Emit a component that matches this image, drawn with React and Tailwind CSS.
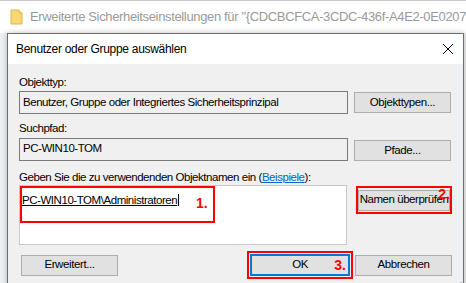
import React from 'react'

const font = { fontFamily: '"Liberation Sans", Arial, sans-serif' }

function Btn({ children, className = '' }) {
  return (
    <div className={`h-[21px] w-[97px] bg-[#e1e1e1] border border-[#adadad] flex items-center justify-center text-[11.5px] tracking-[-0.4px] text-black whitespace-nowrap ${className}`}>
      {children}
    </div>
  )
}

function Field({ children }) {
  return (
    <div className="h-[23px] w-[329px] border border-[#7a7a7a] bg-[#f0f0f0] flex items-center px-[3px] text-[11.5px] tracking-[-0.45px] text-black whitespace-nowrap overflow-hidden">
      {children}
    </div>
  )
}

export default function App() {
  return (
    <div className="w-[466px] h-[283px] overflow-hidden bg-[#f0f0f0] relative" style={font}>
      {/* background window title */}
      <div className="h-[33px] bg-white border-t border-[#c8c8c8] flex items-center gap-[7px] pl-[10px] whitespace-nowrap overflow-hidden">
        <svg className="shrink-0" width="13" height="16" viewBox="0 0 13 16">
          <path d="M1 1h8l3 3v11H1z" fill="#f8d775" stroke="#e0b64a" />
          <path d="M9 1v3h3" fill="#fbe6a3" stroke="#e0b64a" />
        </svg>
        <span className="text-[13px] tracking-[-0.35px] text-[#9a9a9a]">Erweiterte Sicherheitseinstellungen für "{'{'}CDCBCFCA-3CDC-436f-A4E2-0E02075250C</span>
      </div>

      <div className="flex">
        <div className="w-[7px] shrink-0" />
        {/* dialog */}
        <div className="w-[457px] h-[260px] border border-[#1883d7] bg-[#f0f0f0] flex flex-col shadow-[0_0_6px_rgba(0,0,0,0.25)]">
          <div className="h-[30px] bg-white flex items-center justify-between pl-[8px] pr-[9px]">
            <span className="text-[12px] tracking-[-0.3px] text-black">Benutzer oder Gruppe auswählen</span>
            <svg width="12" height="12" viewBox="0 0 12 12">
              <path d="M1 1L11 11M11 1L1 11" stroke="#000" strokeWidth="1" />
            </svg>
          </div>

          <div className="relative flex-1 pl-[11px] pt-[10px] text-[11.5px] tracking-[-0.45px]">
            <div className="leading-[16px] text-black">Objekttyp:</div>
            <div className="flex items-center gap-[6px] mt-[1px]">
              <Field>Benutzer, Gruppe oder Integriertes Sicherheitsprinzipal</Field>
              <Btn>Objekttypen...</Btn>
            </div>

            <div className="leading-[16px] text-black mt-[6px]">Suchpfad:</div>
            <div className="flex items-center gap-[6px] mt-[1px]">
              <Field>PC-WIN10-TOM</Field>
              <Btn className="mt-[3px]">Pfade...</Btn>
            </div>

            <div className="leading-[16px] text-black mt-[8px] whitespace-nowrap">
              Geben Sie die zu verwendenden Objektnamen ein (<span className="text-[#0066cc] underline">Beispiele</span>):
            </div>
            <div className="flex items-start gap-[9px]">
              <div className="relative h-[60px] w-[328px] bg-white border border-[#c8c8c8] pl-[2px] pt-[6px]">
                <span className="leading-[15px] text-black underline whitespace-nowrap border-r border-black pr-[1px]">PC-WIN10-TOM\Administratoren</span>
                <div className="absolute left-[0px] top-[0px] w-[195px] h-[37px] border-2 border-[#ff0000]" />
                <span className="absolute left-[176px] top-[9px] text-[14px] tracking-normal font-bold text-[#ff0000] leading-[16px]">1.</span>
              </div>
              <div className="relative mt-[1px] w-[96px] h-[28px] border-2 border-[#ff0000] flex items-center justify-center">
                <div className="h-[21px] w-[92px] bg-[#e1e1e1] border border-[#adadad] flex items-center justify-center text-black whitespace-nowrap">Namen überprüfen</div>
                <span className="absolute right-[0px] top-[-2px] text-[14px] tracking-normal font-bold text-[#ff0000] leading-[16px]">2.</span>
              </div>
            </div>

            <div className="flex items-center mt-[6px]">
              <Btn className="ml-[2px]">Erweitert...</Btn>
              <div className="relative ml-[129px] w-[106px] h-[28px] border-2 border-[#ff0000] p-[1px]">
                <div className="w-full h-full bg-[#e1e1e1] border-2 border-[#0078d7] flex items-center justify-center text-black">OK</div>
                <span className="absolute right-[5px] top-[4px] text-[14px] tracking-normal font-bold text-[#ff0000] leading-[16px]">3.</span>
              </div>
              <Btn className="ml-[2px]">Abbrechen</Btn>
            </div>

            <svg className="absolute right-[1px] bottom-[2px]" width="8" height="8" viewBox="0 0 8 8">
              <rect x="6" y="0" width="2" height="2" fill="#b8b8b8" />
              <rect x="3" y="3" width="2" height="2" fill="#b8b8b8" />
              <rect x="6" y="3" width="2" height="2" fill="#b8b8b8" />
              <rect x="0" y="6" width="2" height="2" fill="#b8b8b8" />
              <rect x="3" y="6" width="2" height="2" fill="#b8b8b8" />
              <rect x="6" y="6" width="2" height="2" fill="#b8b8b8" />
            </svg>
          </div>
        </div>
      </div>
    </div>
  )
}
